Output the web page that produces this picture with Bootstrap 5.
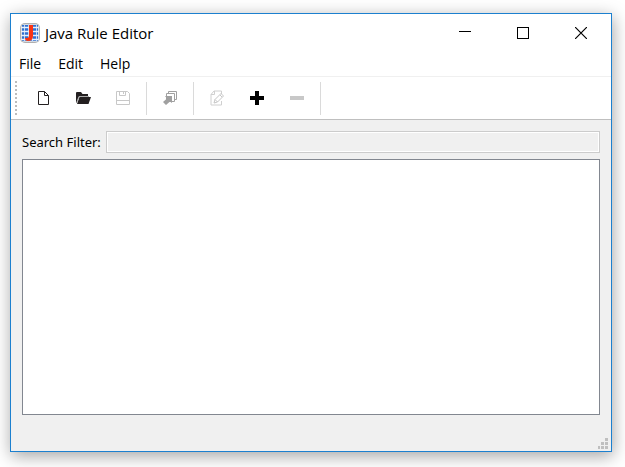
<!DOCTYPE html>
<html lang="en">
<head>
<meta charset="utf-8">
<meta name="viewport" content="width=device-width, initial-scale=1">
<title>Java Rule Editor</title>
<link href="https://cdn.jsdelivr.net/npm/bootstrap@5.3.0/dist/css/bootstrap.min.css" rel="stylesheet">
<style>
  body { font-family: "Open Sans", "Noto Sans", sans-serif; color: #000; background: #fff; padding: 13px 13px 15px 10px; overflow: hidden; }
  .app-window { border: 1px solid #1c80cf; background: #f0f0f0; box-shadow: 1px 4px 16px 0 rgba(0, 0, 0, .36); }
  .title-bar { height: 37px; padding: 0 1px 0 9px; }
  .title-text { font-size: 15px; line-height: 20px; margin-left: 5px; }
  .window-button { width: 58px; height: 36px; }
  .menu-bar { height: 25px; padding: 1px 8px 0; font-size: 14px; gap: 17px; }
  .menu-bar a { color: #000; text-decoration: none; line-height: 20px; }
  .tool-bar { height: 44px; border-top: 1px solid #f0f0f0; border-bottom: 1px solid #bfbfbf; padding-left: 4px; }
  .tool-grip { width: 2px; height: 34px; margin-right: 6px; background: repeating-linear-gradient(#bcbcbc 0 2px, transparent 2px 4px); }
  .tool-button { width: 40px; height: 34px; }
  .tool-rule { width: 1px; height: 33px; margin: 0 3px; background: #dadada; }
  .plain-button { padding: 0; border: 0; background: transparent; display: flex; align-items: center; justify-content: center; }
  .work-area { padding: 11px 11px 0; }
  .filter-label { font-family: "Noto Sans", sans-serif; font-size: 13px; line-height: 22px; margin-right: 5px; }
  .filter-input { height: 22px; padding: 0 4px; font-size: 12px; border: 1px solid #ccc; border-radius: 0; background: #f0f0f0; box-shadow: inset 0 0 0 1px #fff; }
  .rule-list { margin-top: 6px; padding: 4px; border: 1px solid #828790; border-radius: 0; resize: none; background: #fff; font-size: 12px; }
  .status-strip { height: 36px; padding: 0 2px 1px 0; }
</style>
<script src="https://cdn.jsdelivr.net/npm/bootstrap@5.3.0/dist/js/bootstrap.bundle.min.js"></script>
</head>
<body class="vh-100 d-flex flex-column">
<main class="app-window flex-grow-1 d-flex flex-column">
  <header class="title-bar bg-white d-flex align-items-center">
    <svg width="20" height="20" viewBox="0 0 20 20" aria-hidden="true">
      <defs>
        <clipPath id="tile"><rect x="1" y="1" width="18" height="18" rx="4"/></clipPath>
      </defs>
      <rect width="20" height="20" rx="5" fill="#b0b0b0"/>
      <g clip-path="url(#tile)">
        <rect width="20" height="20" fill="#dcdcdc"/>
        <rect x="2" y="2" width="16" height="16" fill="#2f6fd0"/>
        <path d="M4.500 1V19M8.500 1V19M12.500 1V19M16.500 1V19" stroke="#bcd4f4" stroke-width="1"/>
        <path d="M1 4.500H19M1 8.500H19M1 12.500H19M1 16.500H19" stroke="#e8f1fc" stroke-width="1.500"/>
      </g>
      <path d="M9 2H13V13Q13 18 8 18Q5 18 5 15H7Q9 15 9 12Z" fill="#fb3412"/>
    </svg>
    <h1 class="title-text fw-normal mb-0 me-auto">Java Rule Editor</h1>
    <button type="button" class="plain-button window-button" aria-label="Minimize">
      <svg width="12" height="12" shape-rendering="crispEdges"><path d="M0 4h12v1H0z"/></svg>
    </button>
    <button type="button" class="plain-button window-button" aria-label="Maximize">
      <svg width="12" height="12" shape-rendering="crispEdges"><path d="M.5 .5h11v11H.5z" fill="none" stroke="#000"/></svg>
    </button>
    <button type="button" class="plain-button window-button" aria-label="Close">
      <svg width="12" height="12"><path d="M0 0L12 12M12 0L0 12" stroke="#000" stroke-width="1.200"/></svg>
    </button>
  </header>
  <nav class="menu-bar bg-white d-flex align-items-center" aria-label="Menu">
    <a href="#file">File</a>
    <a href="#edit">Edit</a>
    <a href="#help">Help</a>
  </nav>
  <div class="tool-bar bg-white d-flex align-items-center" role="toolbar" aria-label="Tools">
    <div class="tool-grip"></div>
    <button type="button" class="plain-button tool-button" aria-label="New">
      <svg width="16" height="16"><path d="M3.500 1.500H9.500L13.500 5.500V14.500H3.500ZM9.500 1.500V5.500H13.500" fill="none" stroke="#231f20"/></svg>
    </button>
    <button type="button" class="plain-button tool-button" aria-label="Open">
      <svg width="16" height="16"><path d="M1 13V3Q1 2 2 2H6L7.500 4H13V6.500H4L1.500 13Z" fill="#231f20"/><path d="M4.500 7H16L13.500 14H2Z" fill="#231f20"/><path d="M1.500 13L4 6.500H14" fill="none" stroke="#a9a9a9"/></svg>
    </button>
    <button type="button" class="plain-button tool-button" aria-label="Save">
      <svg width="16" height="16"><path d="M1.500 1.500H12.500L14.500 3.500V14.500H1.500ZM4.500 1.500V5.500H10.500V1.500M1.500 10.500H14.500M8.500 2V4" fill="none" stroke="#c8c8c8"/></svg>
    </button>
    <div class="tool-rule"></div>
    <button type="button" class="plain-button tool-button" aria-label="Load rules">
      <svg width="16" height="16"><g fill="#fff" stroke="#a0a0a0"><path d="M6.500 1.500H14.500V9.500H6.500Z"/><path d="M4.500 3.500H12.500V11.500H4.500Z"/></g><path d="M3 6H10V13L8 11.500L4 15L1 12L5 8.500Z" fill="#a0a0a0"/></svg>
    </button>
    <div class="tool-rule"></div>
    <button type="button" class="plain-button tool-button" aria-label="Edit rule">
      <svg width="16" height="16"><g fill="none" stroke="#d0d0d0"><path d="M12.500 4V1H5L2 4.500V15H12.500V11M5.500 1V4.500H2"/><path d="M5 13L6 9.500L12 3.500L14.500 6L8.500 12ZM6 9.500L8.500 12M11 5L13 7" stroke="#c6c6c6"/></g></svg>
    </button>
    <button type="button" class="plain-button tool-button" aria-label="Add">
      <svg width="16" height="16" shape-rendering="crispEdges"><path d="M6 1h4v5h5v4h-5v5H6v-5H1V6h5z"/></svg>
    </button>
    <button type="button" class="plain-button tool-button" aria-label="Remove">
      <svg width="16" height="16" shape-rendering="crispEdges"><path d="M1 6h14v4H1z" fill="#c8c8c8"/></svg>
    </button>
    <div class="tool-rule"></div>
  </div>
  <section class="work-area flex-grow-1 d-flex flex-column">
    <div class="d-flex align-items-center">
      <label class="filter-label text-nowrap" for="filter">Search Filter:</label>
      <input id="filter" type="text" class="filter-input flex-grow-1">
    </div>
    <textarea class="rule-list flex-grow-1 w-100" aria-label="Rules"></textarea>
  </section>
  <footer class="status-strip d-flex justify-content-end align-items-end">
    <svg width="12" height="12" shape-rendering="crispEdges" fill="#bfbfbf" aria-hidden="true">
      <path d="M8 0h3v3H8zM4 4h3v3H4zM8 4h3v3H8zM1 8h2v3H1zM4 8h3v3H4zM8 8h3v3H8z"/>
    </svg>
  </footer>
</main>
</body>
</html>
